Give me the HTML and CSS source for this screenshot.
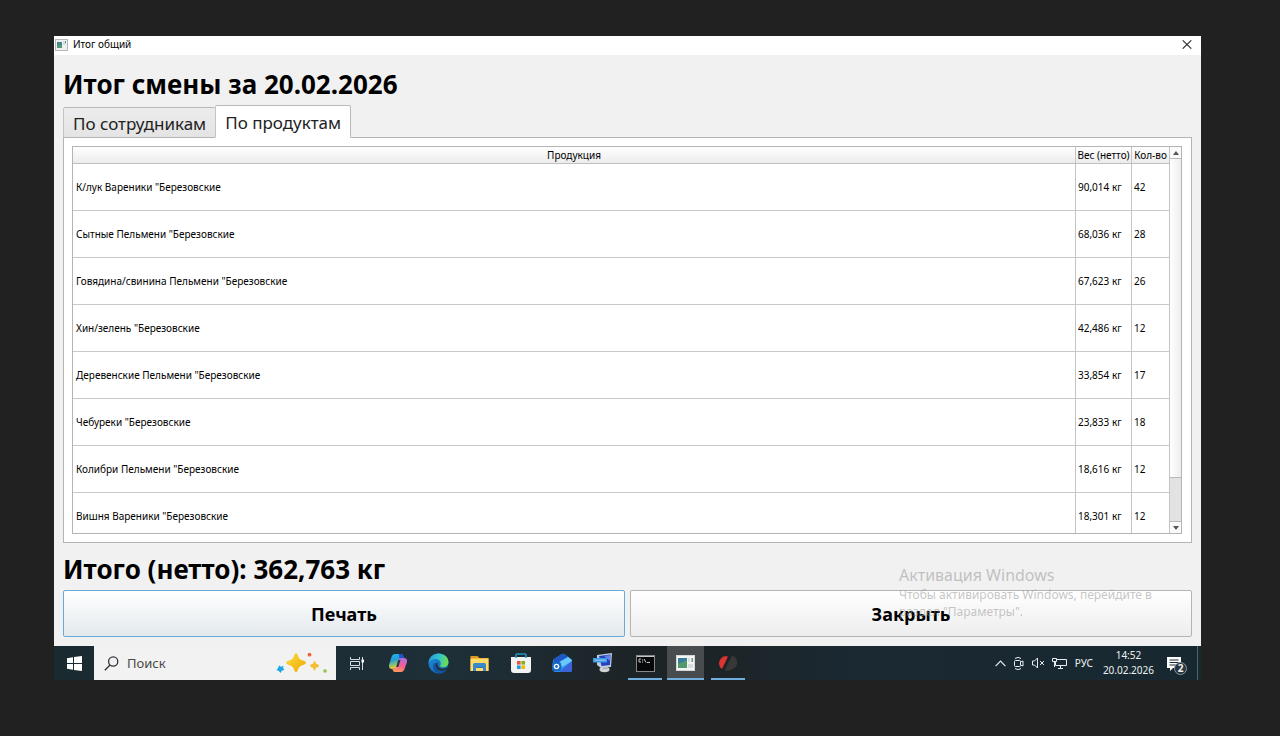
FILE: index.html
```html
<!DOCTYPE html>
<html lang="ru">
<head>
<meta charset="utf-8">
<meta name="viewport" content="width=device-width, initial-scale=1">
<title>Итог общий</title>
<link rel="stylesheet" href="styles.css">
</head>
<body>
<div class="screen">
  <main class="window">
    <header class="titlebar">
      <svg class="app-icon" viewBox="0 0 13 12" aria-hidden="true"><rect x=".5" y=".5" width="12" height="11" fill="#eef1f1" stroke="#b3b8b8"/><rect x="2" y="3" width="5" height="6" fill="#45858c"/><rect x="2" y="6" width="5" height="3" fill="#57977a"/><rect x="8" y="2" width="3" height="4" fill="#d5dddd"/><path d="M10 2h1v2h-1z" fill="#5c9a80"/></svg>
      <span class="title">Итог общий</span>
      <button class="close" type="button" aria-label="Закрыть окно"><svg width="10" height="9" viewBox="0 0 10 9"><path d="M.7 .3l8.600 8.400M9.300 .3L.7 8.700" stroke="#333" stroke-width="1.100" fill="none"/></svg></button>
    </header>
    <div class="content">
      <h1 class="heading">Итог смены за 20.02.2026</h1>
      <div class="tabs" role="tablist">
        <button class="tab" type="button" role="tab" aria-selected="false">По сотрудникам</button>
        <button class="tab tab-active" type="button" role="tab" aria-selected="true" aria-controls="products">По продуктам</button>
      </div>
      <section class="pane" id="products" role="tabpanel">
        <div class="grid">
          <div class="grid-view">
            <table class="report">
              <colgroup><col><col class="col-weight"><col class="col-count"></colgroup>
              <thead><tr><th>Продукция</th><th>Вес (нетто)</th><th>Кол-во</th></tr></thead>
              <tbody>
                <tr><td>К/лук Вареники "Березовские</td><td>90,014 кг</td><td>42</td></tr>
                <tr><td>Сытные Пельмени "Березовские</td><td>68,036 кг</td><td>28</td></tr>
                <tr><td>Говядина/свинина Пельмени "Березовские</td><td>67,623 кг</td><td>26</td></tr>
                <tr><td>Хин/зелень "Березовские</td><td>42,486 кг</td><td>12</td></tr>
                <tr><td>Деревенские Пельмени "Березовские</td><td>33,854 кг</td><td>17</td></tr>
                <tr><td>Чебуреки "Березовские</td><td>23,833 кг</td><td>18</td></tr>
                <tr><td>Колибри Пельмени "Березовские</td><td>18,616 кг</td><td>12</td></tr>
                <tr><td>Вишня Вареники "Березовские</td><td>18,301 кг</td><td>12</td></tr>
              </tbody>
            </table>
          </div>
          <div class="scrollbar">
            <button class="scroll-arrow scroll-up" type="button" aria-label="Вверх"><svg width="6" height="4" viewBox="0 0 6 4"><path d="M0 4l3-4 3 4z" fill="#555"/></svg></button>
            <div class="scroll-track"><div class="scroll-thumb"></div></div>
            <button class="scroll-arrow scroll-down" type="button" aria-label="Вниз"><svg width="6" height="4" viewBox="0 0 6 4"><path d="M0 0l3 4 3-4z" fill="#555"/></svg></button>
          </div>
        </div>
      </section>
      <p class="heading total">Итого (нетто): 362,763 кг</p>
      <div class="actions">
        <button class="action action-default" type="button">Печать</button>
        <button class="action" type="button">Закрыть</button>
      </div>
    </div>
    <aside class="watermark">
      <p class="watermark-title">Активация Windows</p>
      <p class="watermark-text">Чтобы активировать Windows, перейдите в<br>раздел "Параметры".</p>
    </aside>
  </main>
  <footer class="taskbar">
    <button class="start" type="button" aria-label="Пуск"><svg width="15" height="15" viewBox="0 0 15 15" fill="#fff"><path d="M0 2.200L6 1.300V7H0zM7 1.100L15 0v7H7zM0 8h6v5.700L0 12.800zM7 8h8v7l-8-1.100z"/></svg></button>
    <div class="search">
      <svg width="15" height="15" viewBox="0 0 15 15" fill="none" stroke="#333" stroke-width="1.300"><circle cx="9.200" cy="5.500" r="4.600"/><path d="M6 9L.8 14.200"/></svg>
      <input class="search-input" type="text" placeholder="Поиск" aria-label="Поиск">
      <svg class="sparkles" width="52" height="22" viewBox="0 0 52 22" aria-hidden="true">
        <defs><linearGradient id="gold" x1="0" y1="0" x2="1" y2="1"><stop offset="0" stop-color="#ffe043"/><stop offset="1" stop-color="#eda500"/></linearGradient></defs>
        <path d="M20 1q1.300 0 2 2.700Q22.900 7.500 27 8.500q3 .8 3 2.200T27 12.900Q22.900 13.900 22 17.600q-.7 2.600-2 2.600t-2-2.600Q17.100 13.900 13 12.900q-3-.8-3-2.200t3-2.200q4.100-1 5-4.800Q18.700 1 20 1z" fill="url(#gold)"/>
        <path d="M38.500 9q1 0 1.500 2.800 2.800.7 3.200 1.900-.4 1.300-3.200 2-.5 2.700-1.500 2.700t-1.500-2.700q-2.800-.7-3.200-2 .4-1.200 3.200-1.900.5-2.800 1.500-2.800z" fill="#f5bd32"/>
        <path d="M3 13.500l2 1.300 2.400-.9-.2 2.400 1.200 1.800-2.400.3L4.500 21l-1.600-2L.5 18l1.500-1.700z" fill="#19a5e9"/>
        <circle cx="33.500" cy="2.700" r="1.900" fill="#ee6433"/><circle cx="49" cy="19" r="1.800" fill="#8dc63f"/>
      </svg>
    </div>
    <nav class="apps" aria-label="Приложения">
      <button class="app" type="button" aria-label="Представление задач"><svg width="16" height="15" viewBox="0 0 16 15" fill="none" stroke="#d5dbde"><path d="M1.500 1v2.500h9V1M1.500 14v-2.500h9V14M1.500 5.500h9v4h-9zM13.500 1v13"/><path d="M12.500 3.500h2.500v3h-2.500z" fill="#fff" stroke="none"/></svg></button>
      <button class="app" type="button" aria-label="Copilot"><svg width="20" height="20" viewBox="0 0 20 20"><defs><linearGradient id="cp1" x1="0" y1="0" x2=".3" y2="1"><stop offset="0" stop-color="#1cb7e7"/><stop offset=".45" stop-color="#269fd8"/><stop offset=".8" stop-color="#9bc75b"/><stop offset="1" stop-color="#f8cf2a"/></linearGradient><linearGradient id="cp2" x1=".6" y1="0" x2=".3" y2="1"><stop offset="0" stop-color="#b26cdf"/><stop offset=".5" stop-color="#f35f91"/><stop offset="1" stop-color="#ff9b58"/></linearGradient></defs><path d="M7 1h6q2 0 2.500 3l.4 1.500h-2.500q-1.500 0-2 2L9.500 14q-.6 2-2 2H4Q.5 16 1 12L3.500 4Q4.500 1 7 1z" fill="url(#cp1)"/><path d="M11 1h2q2 0 2.500 3l.4 1.500h-2.500q-1.500 0-2 1.500z" fill="#2251c8"/><path d="M13 19H7q-2 0-2.400-2.500L4.300 15h2.500q1.500 0 2-2l1.800-6q.7-2 2.500-2H16q3.500 0 3 4l-2.500 7q-1 3-3.500 3z" fill="url(#cp2)"/><path d="M10.200 7h2.300l-2.200 7H8.200z" fill="#24384a"/></svg></button>
      <button class="app" type="button" aria-label="Edge"><svg width="21" height="21" viewBox="0 0 21 21"><defs><linearGradient id="ed1" x1="0" y1="0" x2="1" y2=".2"><stop offset="0" stop-color="#2498da"/><stop offset=".55" stop-color="#32c2cb"/><stop offset="1" stop-color="#69dc57"/></linearGradient><linearGradient id="ed2" x1="0" y1="0" x2="1" y2="1"><stop offset="0" stop-color="#1c91df"/><stop offset="1" stop-color="#1459a4"/></linearGradient></defs><circle cx="10.500" cy="10.500" r="10" fill="url(#ed2)"/><path d="M.5 10C1 4 5 .4 10.500.4c6 0 10 4 10 8.600 0 3.500-2.500 5.300-5.300 5.300-2 0-3.300-.7-3.300-1.500 0-.6.900-1 .9-2.400C12.800 8 10.500 6 7.500 6 4 6 1.500 8 .5 10z" fill="url(#ed1)"/><path d="M8.200 10c-1.500 4 1.600 8 6 7.800 2-.1 3.500-.8 5-2-2 3.700-5.500 5-8.200 4.700C6 20 4 14 6 10.500z" fill="#1353a0"/><path d="M9.800 9.500c-1.300 3.500 1.500 6.300 5 6.300 2 0 3.500-.8 4.500-1.500l.5 1c-2 2-3.500 2.500-5.600 2.500-4.500 0-7.500-4-6-7.600z" fill="#20313a"/></svg></button>
      <button class="app" type="button" aria-label="Проводник"><svg width="19" height="17" viewBox="0 0 19 17"><path d="M.5 1h7l2 2h9v13H.5z" fill="#d99a1d"/><path d="M.5 3.500h18V16H.5z" fill="#ffda68"/><path d="M3 16V9.500Q3 8 4.500 8h10Q16 8 16 9.500V16h-3v-4H6v4z" fill="#3989c9"/><path d="M6 12h7v1H6z" fill="#2674b2"/></svg></button>
      <button class="app" type="button" aria-label="Microsoft Store"><svg width="20" height="20" viewBox="0 0 20 20"><path d="M0 4h20v13q0 3-3 3H3q-3 0-3-3z" fill="#f1f2f3"/><path d="M5 5V2q0-1 1-1h8q1 0 1 1v3" fill="none" stroke="#2497c9" stroke-width="1.600"/><path d="M6 8h3.600v3.600H6z" fill="#eb5435"/><path d="M10.400 8H14v3.600h-3.600z" fill="#7cb518"/><path d="M6 12.400h3.600V16H6z" fill="#1c9be0"/><path d="M10.400 12.400H14V16h-3.600z" fill="#f5b80c"/></svg></button>
      <button class="app" type="button" aria-label="Почта"><svg width="20" height="20" viewBox="0 0 20 20"><path d="M1 8q0-1.300 1-2L9 1.500q2-1.300 4 0L19 6q1 .8 1 2v8.500q0 2.500-2.500 2.500h-14Q1 19 1 16.500z" fill="#2c8de9"/><path d="M2 6l7-4.500q2-1.300 4 0L16 4l-9 6-5-1z" fill="#1b57c5"/><path d="M7 9l9-5 3 2.300q1 .7 1 1.700l-9.500 6z" fill="#69c8fa"/><path d="M20 8v8.500q0 2.500-2.500 2.500h-10z" fill="#3c62dc"/><rect x="0" y="9" width="9" height="9" rx="2" fill="#1767c4"/><circle cx="4.500" cy="13.500" r="2.100" fill="none" stroke="#fff" stroke-width="1.400"/></svg></button>
      <button class="app" type="button" aria-label="Удалённый доступ"><svg width="20" height="20" viewBox="0 0 20 20"><ellipse cx="11.500" cy="16.500" rx="5" ry="2.800" fill="#cfd3d4"/><path d="M9.500 12h5v4h-5z" fill="#a8afb4"/><path d="M4 2l15-2-1 14-10 1-4-3z" fill="#c3ccdc"/><path d="M6 3l11.500-1.500L17 12l-8.500 1z" fill="#2440bd"/><path d="M11 3l6.500-1-.3 6z" fill="#6485e7"/><path d="M0 5h14v4.500H0z" fill="#3d9be3"/><path d="M1.500 7.200h11" stroke="#9fcdf2"/></svg></button>
      <button class="app app-running" type="button" aria-label="Командная строка"><svg width="19" height="17" viewBox="0 0 19 17"><rect x=".5" y=".5" width="18" height="16" fill="#080808" stroke="#85898b"/><path d="M1 1.500h17" stroke="#c5c8ca"/><path d="M3 4v3M3 4h2M3 7h2M6.500 4.500v1M6.500 6.500v1M8 4l2 3.500M11 7.500h3" stroke="#c8c8c8" fill="none"/></svg></button>
      <button class="app app-running app-current" type="button" aria-label="Итог общий"><svg width="19" height="16" viewBox="0 0 19 16"><rect x=".5" y=".5" width="18" height="15" fill="#f4f5f5" stroke="#d3d6d6"/><path d="M2 3h9v10H2z" fill="#397ca0"/><path d="M2 9l9-4v8H2z" fill="#519968"/><path d="M12 3h2v4h-2zM12 9h5v4h-5z" fill="#d8dcdc"/><path d="M15.500 3h1.500v4h-1.500z" fill="#6b9c6c"/></svg></button>
      <button class="app app-running" type="button" aria-label="Программа учёта"><svg width="20" height="16" viewBox="0 0 20 16"><path d="M10 1.500Q4-.2 1.500 6q-1.600 5.500 2.500 8z" fill="#df3434"/><path d="M14 .5L6.500 15.500q8 1 12-5 2.500-7-4.500-10z" fill="#383838"/></svg></button>
    </nav>
    <div class="tray">
      <button class="tray-icon" type="button" aria-label="Скрытые значки"><svg width="11" height="7" viewBox="0 0 11 7" fill="none" stroke="#e7ecee" stroke-width="1.200"><path d="M.6 6.200L5.500 1.200l4.900 5"/></svg></button>
      <button class="tray-icon" type="button" aria-label="Камера"><svg width="12" height="15" viewBox="0 0 12 15" fill="none" stroke="#e7ecee"><rect x="1.500" y="4.500" width="6" height="6" rx="1"/><path d="M7.500 6l2.500-1v5l-2.500-1M2 2.500Q5 .2 8 2.500M2 12.500q3 2.300 6 0"/></svg></button>
      <button class="tray-icon" type="button" aria-label="Звук выключен"><svg width="13" height="12" viewBox="0 0 13 12" fill="none" stroke="#e7ecee"><path d="M.5 4h2L5.500 1v10l-3-3h-2zM8 4l4 4M12 4L8 8"/></svg></button>
      <button class="tray-icon" type="button" aria-label="Сеть"><svg width="15" height="13" viewBox="0 0 15 13" fill="none" stroke="#e7ecee"><path d="M5 2.500h9.500v6H3.500v-4M8.500 8.500v3M6 11.500h5M.5 1.500h4v3h-4zM2.500 5v5"/></svg></button>
      <span class="language">РУС</span>
      <time class="clock" datetime="2026-02-20T14:52">14:52<br>20.02.2026</time>
      <button class="notices" type="button" aria-label="Уведомления"><svg width="14" height="14" viewBox="0 0 14 14"><path d="M0 0h14v11H6l-3 3v-3H0z" fill="#fff"/><path d="M2.500 3h9M2.500 5.500h9M2.500 8h6" stroke="#1b2a33"/></svg><span class="badge">2</span></button>
    </div>
  </footer>
</div>
</body>
</html>
```
FILE: styles.css
```css
* { box-sizing: border-box; }
body {
  margin: 0;
  background: #212121;
  color: #000;
  font-family: "Noto Sans", "Open Sans", sans-serif;
  font-size: 10px;
}
button { font: inherit; color: inherit; margin: 0; padding: 0; border: 0; background: none; }
svg { display: block; flex: none; }
p, h1 { margin: 0; }

.screen {
  min-height: 100vh;
  padding: 36px 79px 56px 54px;
  display: flex;
  flex-direction: column;
}
.window {
  position: relative;
  flex: 1;
  display: flex;
  flex-direction: column;
  background: #f1f1f1;
}
.titlebar {
  height: 19px;
  display: flex;
  align-items: center;
  gap: 5px;
  padding: 0 9px 2px 1px;
  background: #fff;
}
.app-icon { width: 13px; height: 12px; }
.title { flex: 1; line-height: 17px; }

.content {
  flex: 1;
  display: flex;
  flex-direction: column;
  padding: 9px;
}
.heading { font-size: 26px; line-height: 40px; font-weight: 700; }
.tabs { display: flex; align-items: flex-end; height: 33px; margin-top: 1px; }
.tab {
  height: 31px;
  padding: 2px 9px 0;
  border: 1px solid #b8b8b8;
  border-left-color: #c4c4c4;
  border-right: 0;
  border-radius: 2px 2px 0 0;
  background: linear-gradient(#ececec, #e4e4e4);
  font-size: 17px;
  color: #222;
}
.tab-active {
  position: relative;
  z-index: 1;
  height: 33px;
  border-right: 1px solid #b8b8b8;
  border-bottom-color: #fff;
  background: #fff;
}
.pane {
  flex: 1;
  display: flex;
  margin-top: -1px;
  padding: 8px 9px 8px 8px;
  border: 1px solid #b4b4b4;
  background: #fff;
}
.grid { flex: 1; display: flex; border: 1px solid #b4b4b4; }
.grid-view { flex: 1; height: 386px; overflow: hidden; }
.report { width: 100%; table-layout: fixed; border-collapse: separate; border-spacing: 0; }
.col-weight { width: 56px; }
.col-count { width: 38px; }
.report th {
  height: 17px;
  padding: 0;
  border-right: 1px solid #c4c4c4;
  border-bottom: 1px solid #c0c0c0;
  background: linear-gradient(#fff, #ececec);
  font-weight: 400;
  line-height: 16px;
  white-space: nowrap;
}
.report td {
  height: 47px;
  padding: 0 2px;
  border-right: 1px solid #c4c4c4;
  border-bottom: 1px solid #c8c8c8;
  white-space: nowrap;
}
.report td:first-child { padding-left: 3px; }

.scrollbar { width: 11px; display: flex; flex-direction: column; background: #e2e2e2; }
.scroll-arrow { display: flex; align-items: center; justify-content: center; height: 12px; background: #fafafa; }
.scroll-up { border-bottom: 1px solid #b8b8b8; }
.scroll-down { border-top: 1px solid #b8b8b8; }
.scroll-track { flex: 1; }
.scroll-thumb { height: 88%; border-bottom: 1px solid #b8b8b8; background: linear-gradient(90deg, #fff, #eee); }

.total { margin-top: 6px; }
.actions { display: flex; gap: 5px; margin-top: 1px; }
.action {
  flex: 1;
  height: 47px;
  border: 1px solid #b4b4b4;
  border-radius: 2px;
  background: linear-gradient(#fff, #ededed);
  font-size: 18px;
  font-weight: 700;
}
.action-default { border-color: #66acd6; background: linear-gradient(#fff, #e3e9ec); }

.watermark {
  position: absolute;
  right: 10px;
  bottom: 26px;
  width: 292px;
  color: rgba(150, 150, 150, .55);
  pointer-events: none;
}
.watermark-title { font-size: 16px; line-height: 22px; }
.watermark-text { font-size: 12px; line-height: 17px; }

.taskbar {
  height: 34px;
  display: flex;
  background: linear-gradient(90deg, #192a31, #1e2f38 35%, #1d2427 50%, #1d2427 58%, #1a2932 70%, #182831);
  color: #edf1f2;
}
.start { width: 40px; display: flex; align-items: center; justify-content: center; }
.search { width: 242px; display: flex; align-items: center; gap: 8px; padding: 0 8px 0 10px; background: #f2f2f2; }
.search-input { flex: 1; min-width: 0; padding: 0; border: 0; outline: 0; background: none; font: inherit; font-size: 13px; color: #444; }
.search-input::placeholder { color: #484848; opacity: 1; }
.apps { display: flex; }
.app { width: 41px; display: flex; align-items: center; justify-content: center; }
.app-running { width: 34px; margin: 0 3px 0 5px; border-bottom: 2px solid #70aee0; padding-top: 2px; }
.app-current { width: 37px; margin: 0 2px; background: #484c4e; }
.tray { margin-left: auto; margin-right: 3px; display: flex; align-items: center; gap: 7px; border-right: 1px solid #53616a; padding-right: 10px; }
.tray-icon { display: flex; align-items: center; }
.language { font-size: 10px; margin-left: 1px; }
.clock { font-size: 10px; line-height: 15px; text-align: center; margin-left: 3px; }
.notices { position: relative; width: 20px; height: 20px; margin-left: 6px; padding: 1px 0 0; }
.badge {
  position: absolute;
  right: 0;
  bottom: -2px;
  width: 13px;
  height: 13px;
  border: 1px solid #89949a;
  border-radius: 50%;
  background: #2b363c;
  font-size: 10px;
  font-weight: 700;
  line-height: 11px;
}
```
